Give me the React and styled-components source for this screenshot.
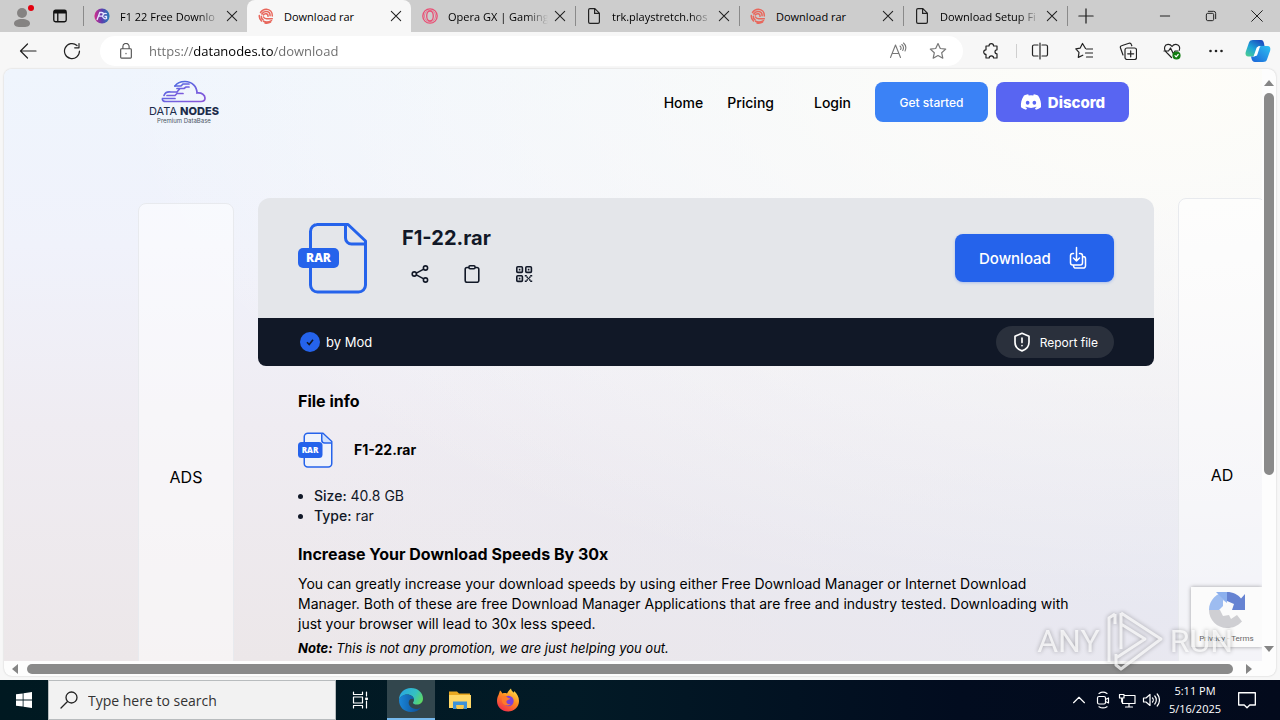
import React from 'react';
import styled, { createGlobalStyle, css } from 'styled-components';
import { FaDiscord } from 'react-icons/fa6';

const tabs = [
    { title: 'F1 22 Free Downlo', icon: 'game', fade: true, line: true },
    { title: 'Download rar', icon: 'swirl', active: true },
    { title: 'Opera GX | Gaming', icon: 'opera', fade: true },
    { title: 'trk.playstretch.hos', icon: 'page', fade: true, line: true },
    { title: 'Download rar', icon: 'swirl', line: true },
    { title: 'Download Setup Fi', icon: 'page', fade: true, line: true },
];

const Favicon = ({ kind }) => {
    if (kind === 'game') {
        return (
            <svg width="16" height="16" viewBox="0 0 16 16">
                <defs>
                    <linearGradient id="game" x1="0" x2="1">
                        <stop offset="0" stopColor="#d52c8c" />
                        <stop offset="0.5" stopColor="#5a3fae" />
                        <stop offset="1" stopColor="#2480b8" />
                    </linearGradient>
                </defs>
                <circle cx="8" cy="8" r="7.6" fill="url(#game)" />
                <path d="M3 12l2.800-7.500h1.800a1.700 1.700 0 0 1 0 3.600H4.600M12.800 5.800A2.700 2.700 0 1 0 12.500 10.500V8.500H10.500" fill="none" stroke="#e6e9ff" strokeWidth="1.300" />
            </svg>
        );
    }
    if (kind === 'swirl') {
        return (
            <svg width="16" height="16" viewBox="0 0 16 16" fill="none" stroke="#e8675c" strokeWidth="1.500" strokeLinecap="round">
                <path d="M2.500 4.500C4 2.200 6 1.200 8.500 1.300c3.600.2 6 3 5.800 6.700M3.800 6C5 4 6.700 3.300 8.600 3.500c2.300.3 3.600 2 3.500 4.300M5.300 7C6.200 5.700 7.300 5.500 8.400 5.800c1.200.4 1.800 1.300 1.600 2.500" />
                <path d="M1.300 7.500C1 10 2 11.500 3.500 13M3.300 8.200c-.1 1.500.6 2.600 1.800 3.600M5.500 9c.5 1 1.500 1.700 3 1.700h5.800M5.500 13.200c2.500 1.200 5.500.8 8-.5M7 15c2.300.4 4.300-.1 5.500-.8" />
            </svg>
        );
    }
    if (kind === 'opera') {
        return (
            <svg width="16" height="16" viewBox="0 0 16 16" fill="none" stroke="#ea4e74">
                <circle cx="8" cy="8" r="7.200" strokeWidth="1.300" />
                <ellipse cx="8" cy="8" rx="3.300" ry="5" strokeWidth="1.300" />
                <circle cx="8" cy="8" r="5.600" strokeWidth="0.600" />
            </svg>
        );
    }
    return (
        <svg width="16" height="16" viewBox="0 0 16 16" fill="none" stroke="#222" strokeWidth="1.200">
            <path d="M2.600 2a1.400 1.400 0 0 1 1.400-1.400h4.800L13.400 5.200v8.800a1.400 1.400 0 0 1-1.400 1.400H4a1.400 1.400 0 0 1-1.400-1.400zM8.600.8v4.600h4.600" />
        </svg>
    );
};

const Line = ({ d, size = 18, color = '#222', width = 1.2, children }) => (
    <svg width={size} height={size} viewBox="0 0 18 18" fill="none" stroke={color} strokeWidth={width} strokeLinecap="round" strokeLinejoin="round">
        <path d={d} />
        {children}
    </svg>
);

const FileIcon = ({ small }) => (
    <svg width={small ? 35 : 70} height={small ? 36 : 72} viewBox="0 0 70 72">
        <path d="M19 2.500h31L67.500 19v44a7 7 0 0 1-7 7H19.500a7 7 0 0 1-7-7V9.500a7 7 0 0 1 7-7z" fill={small ? '#eef2fb' : 'none'} stroke="#2563eb" strokeWidth="3" strokeLinejoin="round" />
        <path d="M47.500 3v13a6 6 0 0 0 6 6H67" fill={small ? '#cfe0fc' : 'none'} stroke="#2563eb" strokeWidth="3" />
        <rect x="0" y={small ? 20 : 26} width={small ? 49 : 41} height={small ? 32 : 20} rx={small ? 7 : 5} fill="#2563eb" />
        <text x={small ? 24 : 20.5} y={small ? 42 : 40} textAnchor="middle" fontFamily="Open Sans, sans-serif" fontWeight="800" fontSize={small ? 16 : 12} fill="#fff">RAR</text>
    </svg>
);

const Cloud = () => (
    <svg width="48" height="24" viewBox="0 0 48 24" fill="none" strokeWidth="1.700" strokeLinecap="round">
        <defs>
            <linearGradient id="cloud" x1="0" y1="0" x2="1" y2="1">
                <stop offset="0" stopColor="#3f6fe0" />
                <stop offset="0.500" stopColor="#6a63e0" />
                <stop offset="1" stopColor="#8a55d8" />
            </linearGradient>
        </defs>
        <g stroke="url(#cloud)">
            <path d="M15 6C17 3 21 1.500 25 1.500c7 0 12 5 12 11.500 5-.5 8 2 8 5s-2 3.500-4 3.500H6c-3 0-4-1.500-3.500-3H15" />
            <path d="M4 15.500c1-3 4-4 7-3.500h6l3-3.500h4M15 6h6l2-2h6M17 8.500h7l2-1.500h3M7 15.500h8l2-2h6" />
        </g>
    </svg>
);

const EdgeIcon = () => (
    <svg width="26" height="26" viewBox="0 0 26 26">
        <defs>
            <linearGradient id="edgeTop" x1="0" x2="1" y1="0.300" y2="0.700">
                <stop offset="0" stopColor="#28a7e2" />
                <stop offset="0.600" stopColor="#35c1c0" />
                <stop offset="1" stopColor="#5fd860" />
            </linearGradient>
            <linearGradient id="edgeLow" x1="0" x2="1">
                <stop offset="0" stopColor="#1a86d8" />
                <stop offset="1" stopColor="#0c4a92" />
            </linearGradient>
        </defs>
        <path d="M1 13C1 6 6 1 13 1s12 5 12 10.500c0 4-3 6-6 6-2.500 0-4-.8-4-1.800 0-.6 1-1.200 1-3C16 10 13 7.500 9.500 7.500 5 7.500 2 10 1 13z" fill="url(#edgeTop)" />
        <path d="M1 13c.8-3.500 4.500-5.500 8-5.500 3.500 0 7 2.500 7 5-1-1-4-1.200-5 1.500-1.500 4 2.500 8 7 8 2 0 3.500-.6 5-1.500-2 3-5.500 4.500-10 4.500C6 25 1 20 1 13z" fill="url(#edgeLow)" />
    </svg>
);

const ExplorerIcon = () => (
    <svg width="22" height="20" viewBox="0 0 22 20">
        <path d="M0 1.500h8l2 2h11v14H0z" fill="#e9a820" />
        <path d="M0 5h22v13H0z" fill="#ffd766" />
        <path d="M4 19v-7.500h14V19h-3.500v-4h-7v4z" fill="#3d92d8" />
        <path d="M7.500 15h7v4h-7z" fill="#f7c84e" />
    </svg>
);

const FirefoxIcon = () => (
    <svg width="24" height="24" viewBox="0 0 24 24">
        <defs>
            <linearGradient id="fox" x1="0.800" y1="0" x2="0.200" y2="1">
                <stop offset="0" stopColor="#ffe24a" />
                <stop offset="0.450" stopColor="#ff8a1f" />
                <stop offset="1" stopColor="#f1264f" />
            </linearGradient>
        </defs>
        <path d="M2.500 7 4 2.500c1 .6 1.800 2 2.500 3 1.500-.6 3-.6 4.500 0C12 3.500 13.500 2 15 .5c.2 2 1.500 3 3 4.200V3c3 2.500 5 6 5 10C23 19 18 23.500 12 23.500S1 19 1 13c0-2.500.5-4.200 1.500-6z" fill="url(#fox)" />
        <circle cx="12.500" cy="13" r="5.200" fill="#7a42d8" />
        <path d="M6 9c2-1.500 4-1 5.500.5 1 .8 2.500.5 2.500 1.200 0 1-3 1-3.500 2.600C10 15 12 17 15 16c-3 3-8 1.500-9-2.500-.4-1.800-.3-3 0-4.500z" fill="#ff7a2a" />
    </svg>
);

const CopilotIcon = () => (
    <svg width="26" height="24" viewBox="0 0 26 24">
        <defs>
            <linearGradient id="copA" x1="0" y1="1" x2="0.700" y2="0">
                <stop offset="0" stopColor="#4fd18a" />
                <stop offset="0.500" stopColor="#1fa5d8" />
                <stop offset="1" stopColor="#1b4fc0" />
            </linearGradient>
            <linearGradient id="copB" x1="0" y1="1" x2="1" y2="0">
                <stop offset="0" stopColor="#1a62d8" />
                <stop offset="1" stopColor="#2dc1f2" />
            </linearGradient>
        </defs>
        <path d="M8 1h8c2 0 2.500 1.500 3 3.500L19.500 7H15c-2 0-2.600 1-3 2.500l-1.500 5C10 16.500 9 17.500 7 17.500H3.500C1 17.500 0 15.500.7 13L4 3.500C4.600 1.800 6 1 8 1z" fill="url(#copA)" />
        <path d="M18 23h-8c-2 0-3-1.500-3.500-3.500L6 17.500h2.500c2 0 3-1 3.500-2.500l1.800-5.500C14.400 7.600 15.500 7 17 7h5.500c2.500 0 3.300 2 2.700 4.500L22 20.500c-.6 1.800-2 2.500-4 2.500z" fill="url(#copB)" />
        <path d="M15 7.500l-3 9-3.500 1 3-8.500c.6-1.200 1.800-1.700 3.500-1.500z" fill="#fff" />
    </svg>
);

const RecaptchaIcon = () => (
    <svg width="38" height="38" viewBox="0 0 38 38">
        <path d="M1 19C1 9 9 1 19 1v11l-4-3v6l-4 4z" fill="#9dbcf0" />
        <path d="M8 1h11v10l-5-4z" fill="#8cb0ee" />
        <path d="M19 1c6 0 11 2.500 14 6.500L37 3v16H24l2-6-7-3z" fill="#6683d2" />
        <path d="M1 19h11l3 6 6-1 2 4 6-4 5 6.500C29.500 35 25 37 19 37 9 37 1 29 1 19z" fill="#cfcfd3" />
    </svg>
);

const QrIcon = () => (
    <svg width="18" height="18" viewBox="0 0 18 18" fill="none" stroke="#111827" strokeWidth="1.600">
        <rect x="1.800" y="1.800" width="5.600" height="5.600" rx="1" />
        <rect x="10.800" y="1.800" width="5.600" height="5.600" rx="1" />
        <rect x="1.800" y="10.800" width="5.600" height="5.600" rx="1" />
        <path d="M3.800 4.600h1.600M12.800 4.600h1.600M3.800 13.600h1.600M9.800 10.800h2M15.200 10.800h2M12.500 13.500h2M9.800 16.200h2M15.200 16.200h2M11.500 12.200h1.400M14.100 12.200h1.400M11.500 15h1.400M14.100 15h1.400" />
    </svg>
);

function BrowserTabs() {
    return (
        <TabStrip>
            <ChromeButton $w={33} aria-label="Profile">
                <svg width="22" height="24" viewBox="0 0 22 24">
                    <circle cx="9" cy="9" r="5" fill="#858382" />
                    <path d="M1 19.500c0-3 3.500-4.500 8-4.500s8 1.500 8 4.500S13.500 23 9 23s-8-.5-8-3.500z" fill="#858382" />
                    <circle cx="18" cy="4" r="3" fill="#e3000f" />
                </svg>
            </ChromeButton>
            <ChromeButton $w={39} aria-label="Tab actions">
                <Line size={16} width={1.500} color="#111" d="M2 4.500a2 2 0 0 1 2-2h10a2 2 0 0 1 2 2v9a2 2 0 0 1-2 2H4a2 2 0 0 1-2-2zM2 5.500h14M2.500 4h13M6.500 6v9.500" />
            </ChromeButton>
            <TabList>
                {tabs.map((tab, i) => (
                    <Tab key={i} $active={tab.active} $line={tab.line}>
                        <Favicon kind={tab.icon} />
                        <TabTitle $fade={tab.fade}>{tab.title}</TabTitle>
                        <CloseButton aria-label="Close tab"><Line size={12} width={1.600} color="#222" d="M2 2l14 14M16 2L2 16" /></CloseButton>
                    </Tab>
                ))}
                <Divider $h={20} />
                <ChromeButton $w={36} aria-label="New tab"><Line size={16} width={1.400} d="M9 1v16M1 9h16" /></ChromeButton>
            </TabList>
            <WindowButtons>
                <ChromeButton $w={46} aria-label="Minimize"><Line size={12} width={1.500} d="M2 9h14" /></ChromeButton>
                <ChromeButton $w={46} aria-label="Restore"><Line size={12} width={1.500} d="M2 7a2 2 0 0 1 2-2h7a2 2 0 0 1 2 2v7a2 2 0 0 1-2 2H4a2 2 0 0 1-2-2zM5 2h8a3 3 0 0 1 3 3v8" /></ChromeButton>
                <ChromeButton $w={46} aria-label="Close"><Line size={12} width={1.500} d="M1 1l16 16M17 1L1 17" /></ChromeButton>
            </WindowButtons>
        </TabStrip>
    );
}

function Toolbar() {
    return (
        <ToolbarRow>
            <ChromeButton $w={44} aria-label="Back"><Line d="M17 9H1.500M8.500 2L1.500 9l7 7" /></ChromeButton>
            <ChromeButton $w={44} aria-label="Refresh"><Line d="M16.500 9A7.500 7.500 0 1 1 14 3.500M16 1.500v4.300h-4.300" /></ChromeButton>
            <AddressBar>
                <Line size={16} color="#555" width={1.300} d="M3 7.500a1 1 0 0 1 1-1h10a1 1 0 0 1 1 1v8.500a1 1 0 0 1-1 1H4a1 1 0 0 1-1-1zM5.500 6.500V4a3.500 3.500 0 0 1 7 0v2.500M9 11.500v.5" />
                <UrlInput aria-label="Address" defaultValue="https://datanodes.to/download" />
                <InlineButton aria-label="Read aloud">
                    <Line size={18} color="#777" width={1.100} d="M1.500 15.500L6.500 3l5 12.500M3.300 11.500h6.400M11 4c1.200 1 1.200 2.500.6 3.500M12.800 2.500c2 1.700 2 4 .9 6M14.500 1c2.700 2.300 2.700 5.500 1.500 8" />
                </InlineButton>
                <InlineButton aria-label="Add to favorites">
                    <Line size={18} color="#777" d="M9 1.500l2.300 5 5.400.6-4 3.700 1.100 5.400L9 13.500l-4.800 2.700 1.100-5.400-4-3.700 5.400-.6z" />
                </InlineButton>
            </AddressBar>
            <ChromeButton $w={44} aria-label="Extensions">
                <Line d="M4 4h3a2.300 2.300 0 0 1 4.600 0H15v3.800a2 2 0 0 0 0 4V16h-3.400a2.200 2.200 0 0 0-4.400 0H4v-3.600a2.300 2.300 0 1 1 0-4.600z" />
            </ChromeButton>
            <Divider $h={14} $light />
            <ChromeButton $w={45} aria-label="Split screen">
                <Line d="M9 1v16M7 3H3a1.500 1.500 0 0 0-1.500 1.500v8A1.500 1.500 0 0 0 3 14h4M11 3h4a1.500 1.500 0 0 1 1.500 1.500v8A1.500 1.500 0 0 1 15 14h-4" />
            </ChromeButton>
            <ChromeButton $w={44} aria-label="Favorites">
                <Line d="M10.500 6.500L7.500 1.500l-2.300 4.600-4.400.8 3.200 3.500-.7 5 4.500-2.200M11.500 7h6M10.500 11h7M11.500 15h6" />
            </ChromeButton>
            <ChromeButton $w={44} aria-label="Collections">
                <Line d="M6 8a2 2 0 0 1 2-2h7.500a2 2 0 0 1 2 2v7.500a2 2 0 0 1-2 2H8a2 2 0 0 1-2-2zM11.700 8.800v6M8.700 11.800h6M4 13l-2.500-7c-.4-1 0-2 1-2.300l7.500-2.500c1-.3 2 .2 2.300 1.200l.5 1.400" />
            </ChromeButton>
            <ChromeButton $w={44} aria-label="Browser essentials">
                <Line d="M8.500 15.500L2.500 9.300C.5 6.500 1.500 2.500 5 2.300 7 2.200 8.300 3.400 9 4.500c.8-1.200 2-2.300 4-2.200 3 .2 4.500 3.200 3.300 6M1 9h4.500L7.500 6l3 6 1.500-3h3">
                    <circle cx="13.500" cy="13.500" r="3.500" fill="#107c10" stroke="#107c10" />
                    <path d="M12 13.700l1.200 1.200L15.200 12.500" stroke="#fff" />
                </Line>
            </ChromeButton>
            <ChromeButton $w={44} aria-label="More">
                <svg width="16" height="4" viewBox="0 0 16 4" fill="#222"><circle cx="2.500" cy="2" r="1.300" /><circle cx="8" cy="2" r="1.300" /><circle cx="13.500" cy="2" r="1.300" /></svg>
            </ChromeButton>
            <ChromeButton $w={40} aria-label="Copilot"><CopilotIcon /></ChromeButton>
        </ToolbarRow>
    );
}

function SiteHeader() {
    return (
        <Header>
            <Logo href="#">
                <Cloud />
                <LogoName>DATA <b>NODES</b></LogoName>
                <LogoSub>Premium DataBase</LogoSub>
            </Logo>
            <Nav>
                <NavLink href="#">Home</NavLink>
                <NavLink href="#">Pricing</NavLink>
                <NavLink href="#" $apart>Login</NavLink>
                <HeaderButton $w={113} $bg="#3b82f6">Get started</HeaderButton>
                <HeaderButton $w={133} $bg="#5865f2" $brand><FaDiscord size={22} />Discord</HeaderButton>
            </Nav>
        </Header>
    );
}

function FileCard() {
    return (
        <section>
            <CardTop>
                <FileIcon />
                <CardName>
                    <h1>F1-22.rar</h1>
                    <ActionRow>
                        <IconButton aria-label="Share">
                            <Line color="#111827" width={1.600} d="M5.800 7.900l6.500-3.500M5.800 10.100l6.500 3.500">
                                <circle cx="3.300" cy="9" r="2.100" /><circle cx="14.500" cy="3" r="2.100" /><circle cx="14.500" cy="15" r="2.100" />
                            </Line>
                        </IconButton>
                        <IconButton aria-label="Copy link">
                            <Line color="#111827" width={1.600} d="M6 2.500H4A1.800 1.800 0 0 0 2.200 4.300v11.200a1.800 1.800 0 0 0 1.800 1.800h10a1.800 1.800 0 0 0 1.800-1.800V4.300A1.800 1.800 0 0 0 14 2.500h-2M6 1.800a1 1 0 0 1 1-1h4a1 1 0 0 1 1 1v1a1 1 0 0 1-1 1H7a1 1 0 0 1-1-1z" />
                        </IconButton>
                        <IconButton aria-label="QR code"><QrIcon /></IconButton>
                    </ActionRow>
                </CardName>
                <DownloadButton>
                    Download
                    <svg width="24" height="24" viewBox="0 0 24 24" fill="none" stroke="#fff" strokeWidth="1.500" strokeLinecap="round" strokeLinejoin="round">
                        <path d="M7.500 7.500h-.700A2.300 2.300 0 0 0 4.500 9.800v7a2.300 2.300 0 0 0 2.300 2.300h7.400a2.300 2.300 0 0 0 2.300-2.300v-7a2.300 2.300 0 0 0-2.300-2.300h-.7M7.500 12l3 3 3-3M10.500 1.500V15M16.500 10.500h.7a2.300 2.300 0 0 1 2.300 2.300v7a2.300 2.300 0 0 1-2.300 2.300H9.800a2.300 2.300 0 0 1-2.300-2.300v-.7" />
                    </svg>
                </DownloadButton>
            </CardTop>
            <CardBottom>
                <Author>
                    <svg width="20" height="20" viewBox="0 0 20 20">
                        <circle cx="10" cy="10" r="10" fill="#2563eb" />
                        <path d="M7 10.300l2.200 2.200 3.800-4.700" fill="none" stroke="#111827" strokeWidth="1.600" />
                    </svg>
                    by Mod
                </Author>
                <ReportButton>
                    <Line size={20} color="#fff" width={1.500} d="M9 1.200l6.300 2.600v5.400c0 3.800-2.500 6.500-6.300 7.800-3.800-1.300-6.300-4-6.300-7.800V3.800zM9 5.500v4M9 12.200v.2" />
                    Report file
                </ReportButton>
            </CardBottom>
        </section>
    );
}

function FileInfo() {
    return (
        <Info>
            <h2>File info</h2>
            <FileRow><FileIcon small />F1-22.rar</FileRow>
            <ul>
                <li><b>Size:</b> 40.8 GB</li>
                <li><b>Type:</b> rar</li>
            </ul>
            <h2>Increase Your Download Speeds By 30x</h2>
            <p>
                You can greatly increase your download speeds by using either Free Download Manager or Internet Download<br />
                Manager. Both of these are free Download Manager Applications that are free and industry tested. Downloading with<br />
                just your browser will lead to 30x less speed.
            </p>
            <Note><b>Note:</b> This is not any promotion, we are just helping you out.</Note>
        </Info>
    );
}

function Taskbar() {
    return (
        <Bar>
            <TaskButton aria-label="Start">
                <svg width="16" height="16" viewBox="0 0 16 16" fill="#fff"><path d="M0 2.300l6.700-.9v6.200H0zM7.500 1.300L16 0v7.600H7.500zM0 8.400h6.700v6.200L0 13.700zM7.500 8.400H16V16l-8.500-1.200z" /></svg>
            </TaskButton>
            <SearchBox>
                <Line size={18} width={1.300} d="M17 6.500a5.500 5.500 0 1 1-11 0 5.500 5.500 0 0 1 11 0zM7.500 10.500L1 17" />
                <input aria-label="Search" placeholder="Type here to search" />
            </SearchBox>
            <TaskButton aria-label="Task view">
                <Line size={18} color="#fff" d="M2.500 1v2.500h9V1M2.500 6h9v6h-9zM2.500 17v-2.500h9V17M15.500 1v4M15.500 10v7">
                    <path d="M14.800 7h1.500v1.500h-1.500z" fill="#fff" />
                </Line>
            </TaskButton>
            <TaskButton $active aria-label="Edge"><EdgeIcon /></TaskButton>
            <TaskButton aria-label="File Explorer"><ExplorerIcon /></TaskButton>
            <TaskButton aria-label="Firefox"><FirefoxIcon /></TaskButton>
            <Tray>
                <TrayButton aria-label="Show hidden icons"><Line size={14} color="#fff" width={1.500} d="M2 12.500l7-7 7 7" /></TrayButton>
                <TrayButton aria-label="Meet now"><Line color="#fff" d="M3.500 7a1.500 1.500 0 0 1 1.500-1.500h5A1.500 1.500 0 0 1 11.500 7v4.500A1.500 1.500 0 0 1 10 13H5a1.500 1.500 0 0 1-1.500-1.500zM11.500 8.500L14.500 7v5l-3-1.500M5 2.500C7.500.8 10.500.8 13 2.500M5 15.700c2.500 1.600 5.500 1.600 8 0" /></TrayButton>
                <TrayButton aria-label="Network"><Line color="#fff" d="M6 4.500h11v8H4.500V8M11 12.500V16M7.500 16h7M1.500 3.500h4.500v3.500h-4.500zM3.700 7v4" /></TrayButton>
                <TrayButton aria-label="Volume"><Line color="#fff" d="M1.500 7h2.500l4-3.500v11L4 11H1.500zM10.500 7c1 1 1 3 0 4M12.800 5c2 2.200 2 5.800 0 8M15.200 3c3 3.300 3 8.700 0 12" /></TrayButton>
                <Clock><span>5:11 PM</span><span>5/16/2025</span></Clock>
                <TrayButton $wide aria-label="Notifications"><Line size={20} color="#fff" d="M1.500 2.500h15v11h-5L9 16l-2.500-2.500h-5z" /></TrayButton>
            </Tray>
        </Bar>
    );
}

export default function App() {
    return (
        <Desktop>
            <GlobalStyle />
            <BrowserTabs />
            <Toolbar />
            <Frame>
                <Scroller>
                    <Page>
                        <SiteHeader />
                        <Columns>
                            <Ad $lower>ADS</Ad>
                            <main>
                                <FileCard />
                                <FileInfo />
                            </main>
                            <Ad>AD</Ad>
                        </Columns>
                        <Recaptcha>
                            <RecaptchaIcon />
                            <span><a href="#">Privacy</a> - <a href="#">Terms</a></span>
                        </Recaptcha>
                    </Page>
                    <VScroll>
                        <svg width="10" height="6" viewBox="0 0 10 6" fill="#858585"><path d="M0 6l5-6 5 6z" /></svg>
                        <VTrack><VThumb /></VTrack>
                        <svg width="10" height="6" viewBox="0 0 10 6" fill="#858585"><path d="M0 0l5 6 5-6z" /></svg>
                    </VScroll>
                </Scroller>
                <HScroll>
                    <svg width="6" height="10" viewBox="0 0 6 10" fill="#858585"><path d="M6 0L0 5l6 5z" /></svg>
                    <HThumb />
                    <svg width="6" height="10" viewBox="0 0 6 10" fill="#858585"><path d="M0 0l6 5-6 5z" /></svg>
                </HScroll>
            </Frame>
            <Taskbar />
            <Watermark>
                ANY
                <svg width="58" height="62" viewBox="0 0 58 62" fill="none" stroke="currentColor" strokeWidth="3" strokeLinejoin="round">
                    <path d="M3 52V8l6-4M15 3l40 26-40 30-5-4V44M15 3v36M15 14l24 15-29 19M9 4v10" />
                </svg>
                RUN
            </Watermark>
        </Desktop>
    );
}

const GlobalStyle = createGlobalStyle`
    * {
        box-sizing: border-box;
    }
    body {
        margin: 0;
        font-family: Inter, sans-serif;
        color: #000;
    }
    button {
        border: none;
        padding: 0;
        background: none;
        font: inherit;
        color: inherit;
        cursor: pointer;
    }
    a {
        color: inherit;
        text-decoration: none;
    }
    svg {
        flex-shrink: 0;
    }
`;

const chromeFont = css`
    font-family: "Open Sans", "Noto Sans", sans-serif;
`;

const Desktop = styled.div`
    position: relative;
    display: flex;
    flex-direction: column;
    height: 100vh;
    overflow: hidden;
    background: #f7f7f7;
`;

const TabStrip = styled.div`
    display: flex;
    height: 32px;
    padding-left: 7px;
    background: #cdcdcd;
    ${chromeFont}
`;

const ChromeButton = styled.button`
    display: flex;
    align-items: center;
    justify-content: center;
    width: ${props => props.$w}px;
    flex-shrink: 0;
`;

const TabList = styled.div`
    display: flex;
    flex: 1;
    align-items: center;
    min-width: 0;
    margin-left: 4px;
`;

const Divider = styled.span`
    width: 1px;
    height: ${props => props.$h}px;
    align-self: center;
    margin-left: ${props => (props.$light ? 3 : 0)}px;
    background: ${props => (props.$light ? '#cfcfcf' : '#8a8a8a')};
`;

const Tab = styled.div`
    display: flex;
    align-items: center;
    flex: 0 1 164px;
    min-width: 0;
    height: 32px;
    padding: 0 9px 0 11px;
    font-size: 11px;
    ${props => props.$line && css`
        background: linear-gradient(#8a8a8a, #8a8a8a) left center / 1px 20px no-repeat;
    `}
    ${props => props.$active && css`
        background: #f7f7f7;
        border-radius: 8px 8px 0 0;
    `}
`;

const TabTitle = styled.span`
    flex: 1;
    min-width: 0;
    margin: 0 6px 0 10px;
    overflow: hidden;
    white-space: nowrap;
    ${props => props.$fade && css`
        mask-image: linear-gradient(to right, #000 78%, transparent);
    `}
`;

const CloseButton = styled.button`
    display: flex;
    width: 12px;
`;

const WindowButtons = styled.div`
    display: flex;
`;

const ToolbarRow = styled.div`
    display: flex;
    height: 37px;
    padding: 0 2px 0 6px;
    ${chromeFont}
`;

const AddressBar = styled.div`
    display: flex;
    flex: 1;
    align-items: center;
    min-width: 0;
    height: 30px;
    margin: 4px 6px;
    padding: 0 5px 0 18px;
    border-radius: 15px;
    background: #fff;
`;

/* the host stays black while scheme and path are greyed */
const UrlInput = styled.input`
    flex: 1;
    min-width: 0;
    margin-left: 15px;
    padding: 0;
    border: none;
    outline: none;
    font: inherit;
    font-size: 13px;
    color: transparent;
    background: linear-gradient(to right, #6b6b6b 45px, #000 45px 125px, #6b6b6b 125px);
    background-clip: text;
`;

const InlineButton = styled.button`
    display: flex;
    align-items: center;
    justify-content: center;
    width: 40px;
`;

const Frame = styled.div`
    display: flex;
    flex-direction: column;
    flex: 1;
    min-height: 0;
    margin: 0 4px 4px;
    border-radius: 8px;
    overflow: hidden;
    background: #fdfdfd;
    box-shadow: 0 0 2px rgba(0, 0, 0, 0.2);
`;

const Scroller = styled.div`
    display: flex;
    flex: 1;
    min-height: 0;
`;

const Page = styled.div`
    position: relative;
    display: flex;
    flex-direction: column;
    flex: 1;
    min-width: 0;
    overflow: hidden;
    background:
        radial-gradient(ellipse at 92% 0%, #fefdf8 0%, rgba(254, 252, 247, 0) 65%),
        radial-gradient(ellipse at 100% 85%, #e7e8f2 0%, rgba(231, 232, 242, 0) 55%),
        linear-gradient(to bottom, #eff5fd 0%, #f0f2fb 30%, #efecf2 60%, #ece7e9 100%);
`;

const Header = styled.header`
    display: flex;
    align-items: flex-start;
    justify-content: space-between;
    height: 129px;
    flex-shrink: 0;
    padding: 11px 133px 0 145px;
`;

const Logo = styled.a`
    display: flex;
    flex-direction: column;
    align-items: center;
    white-space: nowrap;
`;

const LogoName = styled.span`
    font-size: 11px;
    line-height: 14px;
    color: #1c2b4a;
    b {
        font-weight: 800;
    }
`;

const LogoSub = styled.span`
    font-size: 6px;
    line-height: 6px;
    color: #4b5563;
`;

const Nav = styled.nav`
    display: flex;
    align-items: center;
    height: 40px;
    margin-top: 2px;
`;

const NavLink = styled.a`
    margin-right: 24px;
    margin-left: ${props => (props.$apart ? 16 : 0)}px;
    font-size: 14px;
    font-weight: 500;
`;

const HeaderButton = styled.button`
    display: flex;
    align-items: center;
    justify-content: center;
    gap: 6px;
    width: ${props => props.$w}px;
    height: 40px;
    border-radius: 8px;
    background: ${props => props.$bg};
    color: #fff;
    font-size: ${props => (props.$brand ? 15 : 12)}px;
    font-weight: ${props => (props.$brand ? 800 : 500)};
    & + & {
        margin-left: 8px;
    }
`;

const Columns = styled.div`
    display: grid;
    flex: 1;
    min-height: 0;
    grid-template-columns: 96px minmax(0, 1fr) 88px;
    column-gap: 24px;
    margin: 0 -4px 0 134px;
`;

const Ad = styled.aside`
    display: flex;
    justify-content: center;
    height: 580px;
    margin-top: ${props => (props.$lower ? 5 : 0)}px;
    padding-top: ${props => (props.$lower ? 261 : 264)}px;
    border: 1px solid #e8eaee;
    border-radius: 8px;
    background: rgba(255, 255, 255, 0.5);
    font-size: 16px;
    line-height: 24px;
`;

const CardTop = styled.div`
    display: flex;
    align-items: center;
    height: 120px;
    padding: 0 40px;
    border-radius: 12px 12px 0 0;
    background: #e4e6ea;
`;

const CardName = styled.div`
    flex: 1;
    margin-left: 34px;
    h1 {
        margin: 0;
        font-size: 20px;
        line-height: 28px;
        color: #111827;
    }
`;

const ActionRow = styled.div`
    display: flex;
    gap: 16px;
    margin-top: 4px;
`;

const IconButton = styled.button`
    display: flex;
    align-items: center;
    justify-content: center;
    width: 36px;
    height: 36px;
`;

const DownloadButton = styled.button`
    display: flex;
    align-items: center;
    justify-content: space-between;
    width: 159px;
    height: 48px;
    padding: 0 24px;
    border-radius: 8px;
    background: #2563eb;
    color: #fff;
    font-size: 15px;
    font-weight: 500;
    box-shadow: 0 1px 3px rgba(37, 99, 235, 0.3);
`;

const CardBottom = styled.div`
    display: flex;
    align-items: center;
    justify-content: space-between;
    height: 48px;
    padding: 0 40px 0 42px;
    border-radius: 0 0 8px 8px;
    background: #111827;
    color: #fff;
    font-size: 12px;
`;

const Author = styled.div`
    display: flex;
    align-items: center;
    gap: 6px;
    font-size: 13px;
`;

const ReportButton = styled.button`
    display: flex;
    align-items: center;
    gap: 8px;
    height: 32px;
    padding: 0 16px;
    border-radius: 16px;
    background: #2a303c;
`;

const Info = styled.section`
    padding: 23px 40px;
    font-size: 14px;
    line-height: 20px;
    h2 {
        margin: 0;
        font-size: 16px;
        font-weight: 700;
        line-height: 24px;
    }
    ul {
        margin: 18px 0 16px;
        padding-left: 16px;
        color: #111827;
    }
    b {
        font-weight: 500;
    }
    p {
        margin: 8px 0 4px;
    }
`;

const FileRow = styled.div`
    display: flex;
    align-items: center;
    gap: 21px;
    margin-top: 19px;
    font-weight: 700;
`;

const Note = styled.div`
    font-size: 13px;
    font-style: italic;
    && b {
        font-weight: 700;
    }
`;

const Recaptcha = styled.div`
    position: absolute;
    right: 0;
    bottom: 14px;
    display: flex;
    flex-direction: column;
    align-items: center;
    gap: 4px;
    width: 71px;
    height: 60px;
    padding-top: 4px;
    background: #fbfbfb;
    box-shadow: 0 0 4px rgba(0, 0, 0, 0.35);
    color: #666;
    font-family: Roboto, sans-serif;
    font-size: 8px;
    line-height: 12px;
`;

const VScroll = styled.div`
    display: flex;
    flex-direction: column;
    align-items: center;
    width: 14px;
    padding: 11px 0 9px;
`;

const VTrack = styled.div`
    flex: 1;
    margin: 7px 0;
`;

const VThumb = styled.div`
    width: 10px;
    height: 70%;
    border-radius: 5px;
    background: #8a8a8a;
`;

const HScroll = styled.div`
    display: flex;
    align-items: center;
    gap: 9px;
    height: 15px;
    padding: 0 24px 0 8px;
`;

const HThumb = styled.div`
    flex: 1;
    height: 10px;
    margin-right: 4px;
    border-radius: 5px;
    background: #8a8a8a;
`;

const Bar = styled.footer`
    display: flex;
    height: 40px;
    flex-shrink: 0;
    background: linear-gradient(to right, #001921 0%, #021a26 45%, #020c1f 75%, #030a1c 100%);
    color: #fff;
    ${chromeFont}
`;

const TaskButton = styled.button`
    display: flex;
    align-items: center;
    justify-content: center;
    width: 48px;
    ${props => props.$active && css`
        margin-left: 3px;
        margin-right: 1px;
        background: #32464d;
        box-shadow: inset 0 -2px #76b9ed;
    `}
`;

const SearchBox = styled.label`
    display: flex;
    align-items: center;
    gap: 10px;
    width: 288px;
    padding: 0 11px;
    border: 1px solid #b8bcbe;
    background: #f2f2f2;
    input {
        flex: 1;
        min-width: 0;
        padding: 0;
        border: none;
        outline: none;
        background: none;
        font: inherit;
        font-size: 14px;
    }
    input::placeholder {
        color: #333;
    }
`;

const Tray = styled.div`
    display: flex;
    margin-left: auto;
    padding-right: 9px;
`;

const TrayButton = styled.button`
    display: flex;
    align-items: center;
    justify-content: center;
    width: ${props => (props.$wide ? 48 : 24)}px;
`;

const Clock = styled.div`
    display: flex;
    flex-direction: column;
    align-items: center;
    justify-content: center;
    width: 60px;
    padding-left: 4px;
    font-size: 11px;
    line-height: 18px;
`;

const Watermark = styled.div`
    position: absolute;
    right: 47px;
    bottom: 48px;
    display: flex;
    align-items: center;
    gap: 6px;
    font-family: Roboto, sans-serif;
    font-size: 32px;
    font-weight: 400;
    line-height: 62px;
    color: rgba(255, 255, 255, 0.75);
    filter: drop-shadow(0 0 2px rgba(0, 0, 0, 0.4));
    pointer-events: none;
`;
